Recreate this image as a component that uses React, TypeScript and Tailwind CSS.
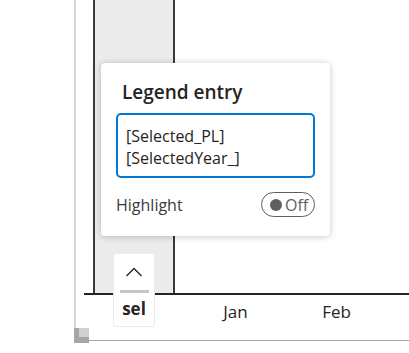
import React from "react";

export default function App() {
  const font = { fontFamily: '"Open Sans", "Noto Sans", sans-serif' };
  return (
    <div className="relative w-[409px] h-[353px] bg-white overflow-hidden" style={font}>
      {/* visual frame */}
      <div className="ml-[74px] flex flex-col">
        <div className="h-[329px] border-l-2 border-[#d6d6d6] pl-[8px] flex flex-col">
          {/* plot area */}
          <div className="h-[293px] grid grid-cols-[101px_101px_101px]">
            <div className="pl-[9px]">
              <div className="w-[82px] h-full bg-[#ebebeb] border-x-2 border-[#3b3a39]" />
            </div>
          </div>
          {/* axis */}
          <div className="h-[2px] bg-[#252423]" />
          {/* labels */}
          <div className="grid grid-cols-[101px_101px_101px] pt-[5px] text-[17px] leading-[24px] text-[#252423] text-center">
            <div />
            <div>Jan</div>
            <div>Feb</div>
          </div>
        </div>
        {/* bottom frame with resize corner */}
        <div className="flex items-end -mt-px">
          <div className="relative w-[15px] h-[15px] bg-[#d0d0d0]">
            <div className="absolute left-0 top-0 w-[5px] h-[15px] bg-[#a6a6a6]" />
            <div className="absolute left-0 bottom-0 w-[15px] h-[6px] bg-[#a6a6a6]" />
          </div>
          <div className="flex-1 h-px bg-[#a8a8a8] mb-[2px]" />
        </div>
      </div>

      {/* sel box (overlay) */}
      <div className="absolute left-[113px] top-[253px] w-[42px] h-[74px] bg-white border border-[#ececec] rounded-[3px] flex flex-col items-center">
        <svg width="18" height="10" viewBox="0 0 18 10" className="mt-[13px]">
          <path d="M1.5 9 L9 1.5 L16.5 9" fill="none" stroke="#252423" strokeWidth="1.3" />
        </svg>
        <div className="mt-[13px] w-[29px] h-[3px] bg-[#c8c6c4]" />
        <div className="mt-[5px] text-[17px] font-bold leading-[22px] text-[#252423]">sel</div>
      </div>

      {/* popup card (overlay) */}
      <div className="absolute left-[101px] top-[63px] w-[229px] h-[173px] bg-white rounded-[4px] shadow-[0_0_6px_rgba(0,0,0,0.15),0_2px_8px_rgba(0,0,0,0.08)] px-[15px] pt-[16px] flex flex-col">
        <div className="pl-[6px] text-[19px] font-semibold leading-[26px] text-[#252423]">Legend entry</div>
        <div className="mt-[8px] h-[65px] border-2 border-[#0078d4] rounded-[5px] px-[8px] pt-[10px] text-[16px] leading-[22px] text-[#252423]">
          <div>[Selected_PL]</div>
          <div>[SelectedYear_]</div>
        </div>
        <div className="mt-[14px] flex items-center justify-between">
          <div className="text-[16px] text-[#3b3a39] leading-[22px]">Highlight</div>
          <div className="w-[54px] h-[25px] rounded-full border border-[#605e5c] flex items-center pl-[8px] gap-[3px]">
            <div className="w-[12px] h-[12px] rounded-full bg-[#605e5c]" />
            <div className="text-[16px] leading-[20px] text-[#605e5c]">Off</div>
          </div>
        </div>
      </div>
    </div>
  );
}
